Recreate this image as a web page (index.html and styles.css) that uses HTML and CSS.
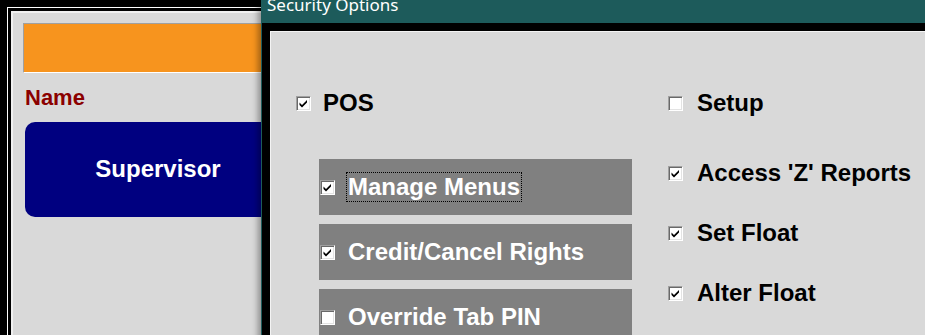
FILE: index.html
```html
<!DOCTYPE html>
<html>
<head>
<meta charset="utf-8">
<link rel="stylesheet" href="styles.css">
</head>
<body>
<div class="desk">
  <div class="main">
    <div class="main-inner">
      <div class="orange"></div>
      <div class="name">Name</div>
      <div class="userbtn">Supervisor</div>
    </div>
  </div>

  <div class="dialog">
    <div class="titlebar">Security Options</div>
    <div class="frame">
      <div class="content">
        <div class="col col-left">
          <div class="opt">
            <span class="cb"><svg viewBox="0 0 13 13" width="13" height="13"><path d="M2.5 5.5 L5 8 L10 3 L10 5.5 L5 10.5 L2.5 8 Z" fill="#000"/></svg></span>
            <span class="txt">POS</span>
          </div>
          <div class="panels">
            <div class="panel">
              <span class="cb"><svg viewBox="0 0 13 13" width="13" height="13"><path d="M2.5 5.5 L5 8 L10 3 L10 5.5 L5 10.5 L2.5 8 Z" fill="#000"/></svg></span>
              <span class="lbl focus">Manage Menus</span>
            </div>
            <div class="panel">
              <span class="cb"><svg viewBox="0 0 13 13" width="13" height="13"><path d="M2.5 5.5 L5 8 L10 3 L10 5.5 L5 10.5 L2.5 8 Z" fill="#000"/></svg></span>
              <span class="lbl">Credit/Cancel Rights</span>
            </div>
            <div class="panel">
              <span class="cb"></span>
              <span class="lbl">Override Tab PIN</span>
            </div>
          </div>
        </div>
        <div class="col col-right">
          <div class="opt">
            <span class="cb"></span>
            <span class="txt">Setup</span>
          </div>
          <div class="opt first-sub">
            <span class="cb"><svg viewBox="0 0 13 13" width="13" height="13"><path d="M2.5 5.5 L5 8 L10 3 L10 5.5 L5 10.5 L2.5 8 Z" fill="#000"/></svg></span>
            <span class="txt">Access 'Z' Reports</span>
          </div>
          <div class="opt sub">
            <span class="cb"><svg viewBox="0 0 13 13" width="13" height="13"><path d="M2.5 5.5 L5 8 L10 3 L10 5.5 L5 10.5 L2.5 8 Z" fill="#000"/></svg></span>
            <span class="txt">Set Float</span>
          </div>
          <div class="opt sub">
            <span class="cb"><svg viewBox="0 0 13 13" width="13" height="13"><path d="M2.5 5.5 L5 8 L10 3 L10 5.5 L5 10.5 L2.5 8 Z" fill="#000"/></svg></span>
            <span class="txt">Alter Float</span>
          </div>
        </div>
      </div>
    </div>
  </div>
</div>
</body>
</html>
```

FILE: styles.css
```css
html, body {
  margin: 0;
  height: 100%;
  overflow: hidden;
  background: #000;
}

.desk {
  position: relative;
  width: 925px;
  height: 335px;
  overflow: hidden;
  background: #000;
}

/* Left (background) window */
.main {
  margin: 7px 0 0 7px;
  width: 400px;
  height: 400px;
  border-top: 1px solid #fff;
  border-left: 1px solid #fff;
  padding: 3px 0 0 3px;
  background: #000;
}

.main-inner {
  height: 100%;
  background: #d9d9d9;
  border-top: 2px solid #f0f0f0;
  border-left: 2px solid #f0f0f0;
  padding: 10px 0 0 10px;
}

.orange {
  width: 300px;
  height: 48px;
  background: #f7941e;
  border: 1px solid;
  border-color: #a0a0a0 #fff #fff #a0a0a0;
}

.name {
  margin: 13px 0 0 2px;
  font: bold 22px/24px "Liberation Sans", Arial, sans-serif;
  color: #8b0000;
}

.userbtn {
  margin: 12px 0 0 2px;
  width: 266px;
  height: 95px;
  box-sizing: border-box;
  padding-bottom: 2px;
  background: #000080;
  border-radius: 10px;
  color: #fff;
  font: bold 24px "Liberation Sans", Arial, sans-serif;
  display: flex;
  align-items: center;
  justify-content: center;
}

/* Dialog window */
.dialog {
  position: absolute;
  left: 261px;
  top: -10px;
  width: 720px;
  height: 420px;
  background: #1d5b5b;
  padding-left: 1px;
  box-shadow: -3px 0 6px rgba(0, 0, 0, 0.35);
}

.titlebar {
  height: 33px;
  box-sizing: border-box;
  padding: 4px 0 0 5px;
  color: #fff;
  font: 17px/22px "Noto Sans", "Open Sans", sans-serif;
}

.frame {
  background: #000;
  padding: 8px 0 0 8px;
}

.content {
  height: 400px;
  background: #d9d9d9;
  border-top: 1px solid #f4f4f4;
  border-left: 1px solid #f4f4f4;
  padding: 57px 0 0 25px;
  display: flex;
}

.col-left {
  width: 372px;
}

.col-right {
  display: flex;
  flex-direction: column;
}

.opt {
  display: flex;
  align-items: center;
  height: 28px;
  font: bold 24px/28px "Liberation Sans", Arial, sans-serif;
  color: #000;
}

.col-left .opt .cb {
  margin-right: 12px;
}

.col-right .opt .cb {
  margin-right: 14px;
}

.col-right .first-sub {
  margin-top: 42px;
}

.col-right .sub {
  margin-top: 32px;
}

.cb {
  flex: none;
  width: 13px;
  height: 13px;
  background: #fff;
  border: 1px solid;
  border-color: #a0a0a0 #fff #fff #a0a0a0;
  box-shadow: inset 1px 1px #696969, inset -1px -1px #e3e3e3;
  display: block;
}

.cb svg {
  display: block;
}

.panels {
  margin: 42px 0 0 23px;
  display: flex;
  flex-direction: column;
  gap: 9px;
}

.panel {
  width: 313px;
  height: 56px;
  background: #808080;
  display: flex;
  align-items: center;
  color: #fff;
  font: bold 24px/28px "Liberation Sans", Arial, sans-serif;
}

.panel .cb {
  margin: 0 11px 0 1px;
}

.lbl {
  border: 1px dotted transparent;
  padding: 0 1px;
}

.lbl.focus {
  border-color: #000;
}
```
